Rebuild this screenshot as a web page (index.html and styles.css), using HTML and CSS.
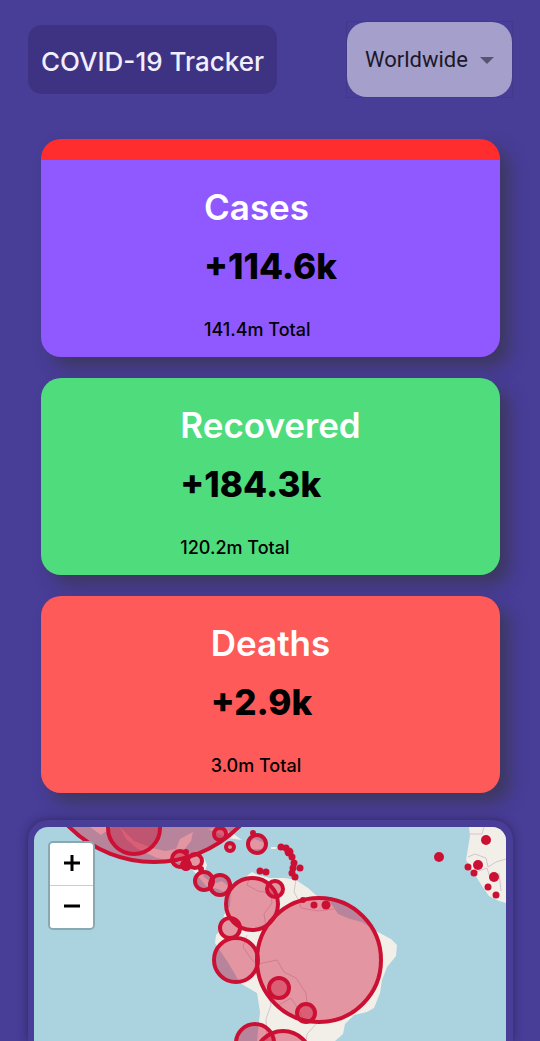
FILE: index.html
```html
<!DOCTYPE html>
<html lang="en">
<head>
<meta charset="utf-8">
<meta name="viewport" content="width=device-width, initial-scale=1">
<title>COVID-19 Tracker</title>
<link rel="stylesheet" href="styles.css">
</head>
<body>
<div class="app">
  <header class="header">
    <h1 class="title">COVID-19 Tracker</h1>
    <div class="picker">
      <select class="picker-select" aria-label="Country">
        <option>Worldwide</option>
      </select>
      <svg class="picker-arrow" viewBox="0 0 14 7" aria-hidden="true"><path d="M0 0H14L7 7Z"/></svg>
    </div>
  </header>

  <main class="main">
    <section class="stats">
      <article class="card card-cases">
        <div class="card-body">
          <h2 class="card-title">Cases</h2>
          <p class="card-new">+114.6k</p>
          <p class="card-total">141.4m Total</p>
        </div>
      </article>
      <article class="card card-recovered">
        <div class="card-body">
          <h2 class="card-title">Recovered</h2>
          <p class="card-new">+184.3k</p>
          <p class="card-total">120.2m Total</p>
        </div>
      </article>
      <article class="card card-deaths">
        <div class="card-body">
          <h2 class="card-title">Deaths</h2>
          <p class="card-new">+2.9k</p>
          <p class="card-total">3.0m Total</p>
        </div>
      </article>
    </section>

    <section class="map-frame" aria-label="Map">
      <div class="map">
        <svg class="map-canvas" viewBox="34 827 472 214" preserveAspectRatio="xMinYMin slice" aria-hidden="true">
          <g class="land">
            <path d="M90 827L101 835L112 827ZM120 827L134 841L152 848L165 851L176 849L180 839L193 832L191 841L183 851L191 855L204 858L207 865L203 876L213 884L222 881L231 888L229 894L218 889L206 886L197 875L189 866L174 861L157 858L138 849L126 839Z"/>
            <path d="M208 829L222 827L235 835L242 840L228 838ZM247 843L255 839L267 844L262 849L250 849ZM226 846L234 847L230 849ZM271 847L277 847L276 849L271 849Z"/>
            <path d="M231 890L240 881L252 872L258 875L270 878L285 878L296 880L308 888L318 897L330 902L338 914L350 919L362 922L376 931L391 939L397 945L396 956L387 967L382 980L380 993L374 1008L367 1012L354 1015L345 1024L343 1034L335 1041H257L260 1012L257 993L240 983L229 964L215 943L216 935L222 928L224 915L230 906Z"/>
            <path d="M469 827L470 836L466 860L474 873L482 886L489 896L499 901L506 903V827Z"/>
          </g>
          <g class="frontiers">
            <path d="M250 876L247 885L258 891L271 893L272 903L264 914L266 927L260 937M296 880L294 892L299 901L301 908L318 911L334 909M247 935L243 947L252 960L258 964L277 960L284 972L296 978L306 993L307 1004L297 1007L291 998L279 1005L267 992L258 976M268 992L271 1005L266 1019L267 1041M297 1007L305 1022L317 1023L307 1034L306 1041"/>
            <path d="M468 834H482L484 827M468 857L475 854L486 858L488 867L496 862L506 859M476 872L487 868L491 881M499 873L501 891"/>
          </g>
          <g class="outbreaks">
            <circle cx="154" cy="742" r="120"/>
            <circle cx="134" cy="828" r="26"/>
            <circle cx="220" cy="834" r="6"/>
            <circle cx="230" cy="847" r="4"/>
            <circle cx="257" cy="844" r="9"/>
            <circle cx="180" cy="859" r="8"/>
            <circle cx="195" cy="861" r="7"/>
            <circle cx="186" cy="865" r="4"/>
            <circle cx="204" cy="881" r="9"/>
            <circle cx="220" cy="885" r="10"/>
            <circle cx="252" cy="904" r="26"/>
            <circle cx="275" cy="889" r="8"/>
            <circle cx="230" cy="928" r="10"/>
            <circle cx="236" cy="960" r="22"/>
            <circle cx="319" cy="960" r="62"/>
            <circle cx="279" cy="988" r="10"/>
            <circle cx="306" cy="1013" r="9"/>
            <circle cx="255" cy="1043" r="19"/>
            <circle cx="283" cy="1059" r="28"/>
          </g>
          <g class="dots">
            <circle cx="253" cy="833" r="3"/>
            <circle cx="186" cy="852" r="3"/>
            <circle cx="186" cy="866" r="5"/>
            <circle cx="201" cy="869" r="3"/>
            <circle cx="281" cy="847" r="3.5"/>
            <circle cx="286" cy="848" r="3.5"/>
            <circle cx="289" cy="852" r="4.5"/>
            <circle cx="292" cy="857" r="3.5"/>
            <circle cx="294" cy="863" r="3.5"/>
            <circle cx="293" cy="868" r="3.5"/>
            <circle cx="292" cy="873" r="3.5"/>
            <circle cx="295" cy="877" r="3.5"/>
            <circle cx="300" cy="868" r="3.5"/>
            <circle cx="260" cy="871" r="3.5"/>
            <circle cx="266" cy="872" r="3.5"/>
            <circle cx="303" cy="900" r="3"/>
            <circle cx="314" cy="905" r="3.5"/>
            <circle cx="326" cy="905" r="4.5"/>
            <circle cx="439" cy="857" r="5"/>
            <circle cx="486" cy="840" r="5"/>
            <circle cx="478" cy="865" r="5"/>
            <circle cx="468" cy="867" r="3.5"/>
            <circle cx="474" cy="873" r="3.5"/>
            <circle cx="494" cy="877" r="5"/>
            <circle cx="488" cy="887" r="3.5"/>
            <circle cx="496" cy="895" r="3.5"/>
          </g>
        </svg>
        <div class="zoom">
          <button class="zoom-button" type="button" aria-label="Zoom in"><svg class="zoom-icon" viewBox="0 0 16 16"><path d="M0 8H16M8 0V16"/></svg></button>
          <button class="zoom-button" type="button" aria-label="Zoom out"><svg class="zoom-icon" viewBox="0 0 16 16"><path d="M0 8H16"/></svg></button>
        </div>
      </div>
    </section>
  </main>
</div>
</body>
</html>
```

FILE: styles.css
```css
* {
  box-sizing: border-box;
}

body {
  margin: 0;
  background: #483d97;
  font-family: Inter, "Liberation Sans", sans-serif;
}

h1, h2, p {
  margin: 0;
}

.app {
  display: flex;
  flex-direction: column;
  min-height: 100vh;
  padding: 21px 27px 0 28px;
}

.header {
  display: flex;
  align-items: center;
  justify-content: space-between;
}

.title {
  padding: 20px 13px 16px;
  border-radius: 14px;
  background: #3e3382;
  color: #f1eeff;
  font-size: 26px;
  line-height: 33px;
  font-weight: 500;
  white-space: nowrap;
}

.picker {
  position: relative;
  border: 1px solid #42388c;
}

.picker-select {
  display: block;
  height: 75px;
  padding: 0 44px 0 18px;
  border: 0;
  border-radius: 20px;
  appearance: none;
  background: #a49fcb;
  color: #1b1829;
  font-family: Roboto, sans-serif;
  font-size: 22px;
}

.picker-arrow {
  position: absolute;
  top: 35px;
  right: 18px;
  width: 14px;
  height: 7px;
  fill: #58536f;
  pointer-events: none;
}

.main {
  display: flex;
  flex: 1;
  flex-direction: column;
  gap: 27px;
  padding-top: 41px;
}

.stats {
  display: flex;
  flex-direction: column;
  gap: 21px;
  padding: 0 13px;
}

.card {
  display: flex;
  justify-content: center;
  padding: 25px 20px 15px;
  border-radius: 20px;
  box-shadow: 10px 10px 16px #3d3862;
}

.card-cases {
  border-top: 21px solid #ff2d2d;
  background: #9059ff;
}

.card-recovered {
  background: #4fdc7d;
}

.card-deaths {
  background: #ff5a5a;
}

.card-title {
  color: #ffffff;
  font-size: 35px;
  line-height: 44px;
  font-weight: 600;
}

.card-new {
  padding-top: 14px;
  font-size: 35px;
  line-height: 46px;
  font-weight: 800;
}

.card-total {
  padding-top: 29px;
  font-size: 18px;
  line-height: 24px;
  font-weight: 500;
}

.map-frame {
  display: flex;
  flex: 1;
  padding: 7px 7px 0 6px;
  border-radius: 20px 20px 0 0;
  background: #483d97;
  box-shadow: 0 0 10px #30265f;
}

.map {
  position: relative;
  flex: 1;
  overflow: hidden;
  min-height: 214px;
  border-radius: 14px 14px 0 0;
  background: #aad3df;
}

.map-canvas {
  position: absolute;
  inset: 0;
  width: 100%;
  height: 100%;
}

.land {
  fill: #f2efe9;
}

.frontiers {
  fill: none;
  stroke: #d5c3cf;
  stroke-width: 1;
}

.outbreaks {
  fill: #cc1034;
  fill-opacity: 0.4;
  stroke: #cc1034;
  stroke-width: 4;
}

.dots {
  fill: #cc1034;
}

.zoom {
  position: absolute;
  top: 14px;
  left: 14px;
  display: flex;
  flex-direction: column;
  overflow: hidden;
  border: 2px solid #88a9b2;
  border-radius: 5px;
}

.zoom-button {
  display: grid;
  place-items: center;
  width: 43px;
  height: 42px;
  padding: 0 0 3px;
  border: 0;
  background: #ffffff;
}

.zoom-button + .zoom-button {
  height: 43px;
  border-top: 1px solid #cccccc;
}

.zoom-icon {
  width: 16px;
  height: 16px;
  fill: none;
  stroke: #000000;
  stroke-width: 3;
}
```
